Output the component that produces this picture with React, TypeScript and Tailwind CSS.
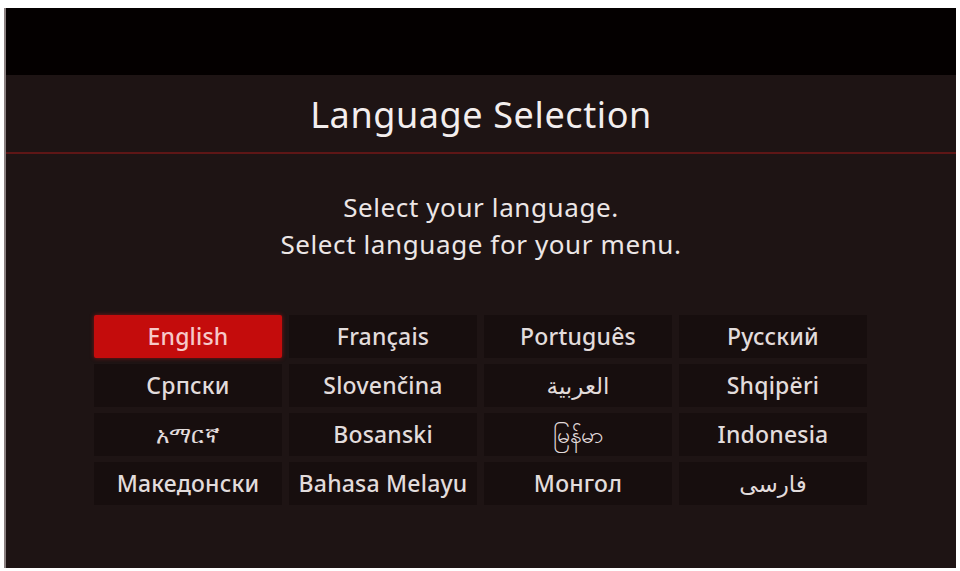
const languages = [
  'English', 'Français', 'Português', 'Русский',
  'Српски', 'Slovenčina', 'العربية', 'Shqipëri',
  'አማርኛ', 'Bosanski', 'မြန်မာ', 'Indonesia',
  'Македонски', 'Bahasa Melayu', 'Монгол', 'فارسی',
];

function LanguageButton({ label, active }: { label: string; active?: boolean }) {
  return (
    <div
      className={`h-[43px] flex items-center justify-center text-[23px] font-medium tracking-[0.2px] ${
        active
          ? 'bg-[#c40c0c] text-[#f6c9c9] rounded-[2px] shadow-[0_0_4px_rgba(200,20,20,0.6)]'
          : 'bg-[#170e0e] text-[#e2dcdc]'
      }`}
    >
      {label}
    </div>
  );
}

export default function App() {
  return (
    <div
      className="w-[960px] h-[571px] bg-white pt-[8px] pl-[4px]"
      style={{ fontFamily: '"Noto Sans", "Open Sans", "DejaVu Sans", sans-serif' }}
    >
      <div className="w-[952px] h-[560px] bg-[#1e1414] border-l-2 border-[#8a8080] flex flex-col">
        {/* top bar */}
        <div className="h-[67px] bg-[#040000]" />

        {/* title */}
        <div className="h-[77px] flex items-center justify-center pt-[2px]">
          <h1 className="text-[36px] text-[#f3eeee] tracking-[0.6px]">Language Selection</h1>
        </div>
        <div className="h-[2px] bg-[#5e1616]" />

        {/* prompt */}
        <div className="mt-[35px] flex flex-col items-center text-[26px] leading-[37px] tracking-[0.6px] text-[#ece6e6]">
          <p>Select your language.</p>
          <p>Select language for your menu.</p>
        </div>

        {/* language grid */}
        <div className="mt-[52px] ml-[88px] w-[773px] grid grid-cols-4 gap-x-[7px] gap-y-[6px]">
          {languages.map((lang, i) => (
            <LanguageButton key={lang} label={lang} active={i === 0} />
          ))}
        </div>
      </div>
    </div>
  );
}
